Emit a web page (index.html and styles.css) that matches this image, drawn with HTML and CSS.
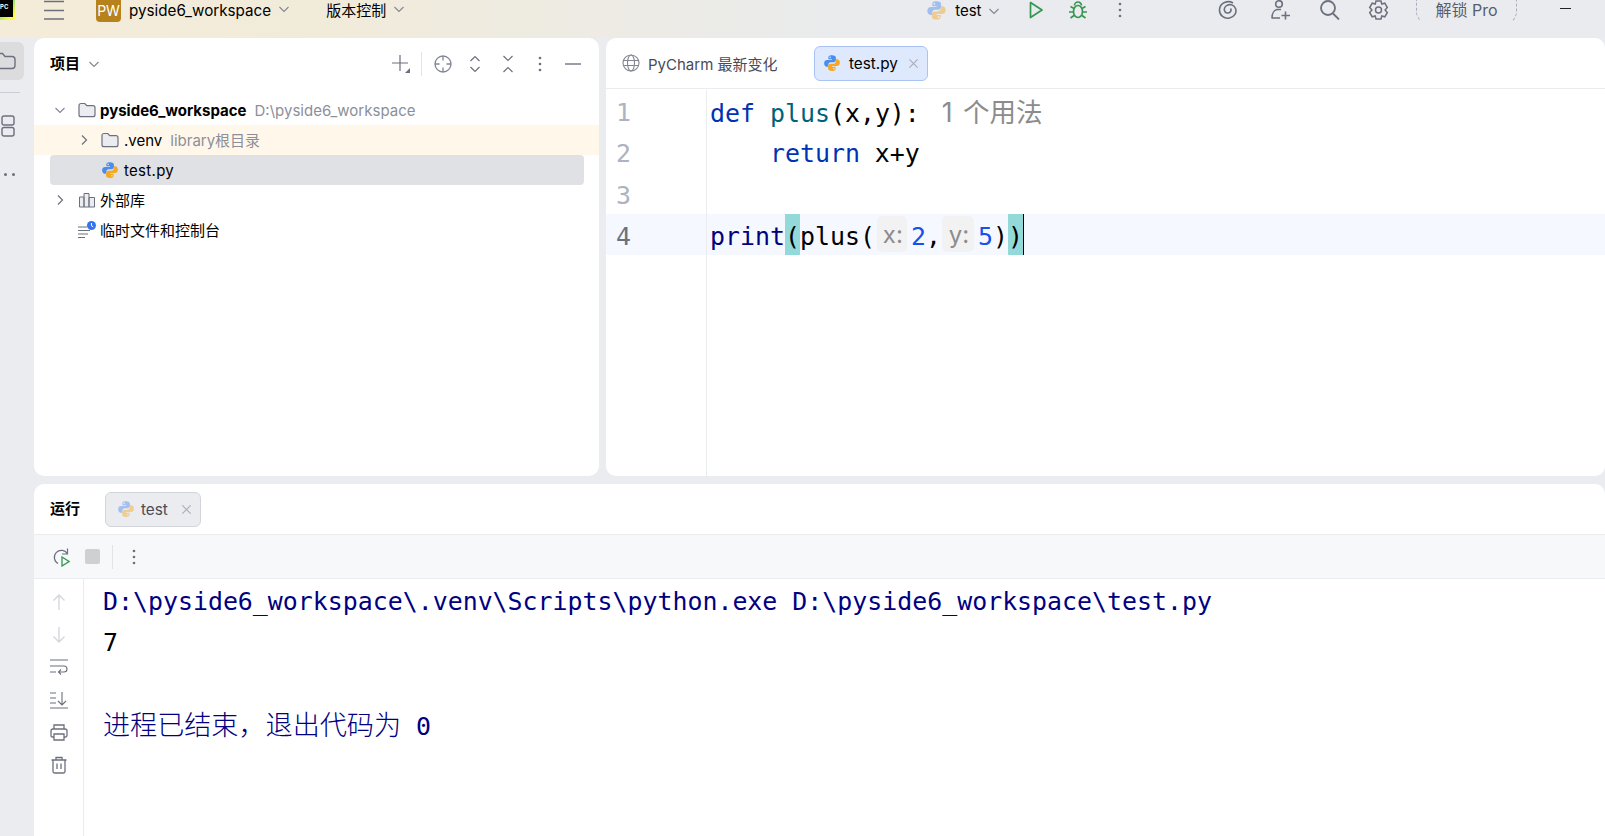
FILE: index.html
```html
<!DOCTYPE html>
<html lang="zh">

<head>
    <meta charset="UTF-8" />
    <title>pyside6_workspace - test.py</title>
    <link rel="stylesheet" href="styles.css">
</head>

<body>
    <svg class="defs" width="0" height="0">
        <symbol id="py" viewBox="0 0 24 24">
            <path fill="#4a8cf0" fill-rule="evenodd" d="M11.900 1.500c-4.100 0-4.700 1.700-4.700 3V7H12v1H5.400C3.300 8 1.500 9.500 1.500 12.300c0 2.900 1.600 4.700 3.600 4.700H7v-2.500C7 12.700 8.400 11 10.200 11h4c1.700 0 3-1.300 3-3V4.500c0-1.600-1.500-3-5.300-3zM9.500 3.300a1.100 1.100 0 110 2.200 1.100 1.100 0 010-2.200z" />
            <path fill="#f6a821" fill-rule="evenodd" transform="rotate(180 12 12)" d="M11.900 1.500c-4.100 0-4.700 1.700-4.700 3V7H12v1H5.400C3.300 8 1.500 9.500 1.500 12.300c0 2.900 1.600 4.700 3.600 4.700H7v-2.500C7 12.700 8.400 11 10.200 11h4c1.700 0 3-1.300 3-3V4.500c0-1.600-1.500-3-5.300-3zM9.500 3.300a1.100 1.100 0 110 2.200 1.100 1.100 0 010-2.200z" />
        </symbol>
        <symbol id="folder" viewBox="0 0 18 18">
            <path fill="#ebecf0" stroke="#6c707e" stroke-width="1.200" d="M1 4.500C1 3.400 1.900 2.500 3 2.500h3.800l2 2.200H15c1.100 0 2 .9 2 2v7c0 1.100-.9 2-2 2H3c-1.100 0-2-.9-2-2z" />
        </symbol>
        <symbol id="chev-down" viewBox="0 0 12 12">
            <path fill="none" stroke="#818594" stroke-width="1.100" d="M1.500 4l4.500 4.500L10.500 4" />
        </symbol>
        <symbol id="chev-right" viewBox="0 0 12 12">
            <path fill="none" stroke="#6c707e" stroke-width="1.200" d="M4 1.500L8.500 6 4 10.500" />
        </symbol>
        <symbol id="close" viewBox="0 0 12 12">
            <path fill="none" stroke="#a8adbd" stroke-width="1.200" d="M1.500 1.500l9 9m0-9l-9 9" />
        </symbol>
        <symbol id="kebab" viewBox="0 0 6 18">
            <circle cx="3" cy="3" r="1.300" fill="#6c707e" />
            <circle cx="3" cy="9" r="1.300" fill="#6c707e" />
            <circle cx="3" cy="15" r="1.300" fill="#6c707e" />
        </symbol>
    </svg>

    <header class="topbar">
        <div class="logo"><span>PC</span></div>
        <svg class="hamburger" viewBox="0 0 20 20">
            <path fill="none" stroke="#6c707e" stroke-width="1.600" d="M0 1.500h20M0 10.500h20M0 19h20" />
        </svg>
        <div class="pw-badge">PW</div>
        <span class="top-title">pyside6_workspace</span>
        <svg class="chev top-chev"><use href="#chev-down" /></svg>
        <span class="top-vcs">版本控制</span>
        <svg class="chev top-chev"><use href="#chev-down" /></svg>

        <svg class="run-py dim"><use href="#py" /></svg>
        <span class="top-run">test</span>
        <svg class="chev run-chev"><use href="#chev-down" /></svg>
        <svg class="run-btn" viewBox="0 0 16 18">
            <path fill="none" stroke="#369650" stroke-width="1.700" stroke-linejoin="round" d="M2.500 1.500L14 9 2.500 16.500z" />
        </svg>
        <svg class="debug-btn" viewBox="0 0 18 20">
            <g fill="none" stroke="#369650" stroke-width="1.700">
                <ellipse cx="9" cy="11.500" rx="4.500" ry="6" />
                <path d="M5.500 5.500a3.500 3.500 0 017 0M1.500 6.500l3.500 2M16.500 6.500l-3.500 2M0 12h4.500M18 12h-4.500M1.500 18l3.500-2.500M16.500 18L13 15.500" />
            </g>
        </svg>
        <svg class="top-kebab"><use href="#kebab" /></svg>

        <svg class="top-ico swirl" viewBox="0 0 20 20">
            <path fill="none" stroke="#6c707e" stroke-width="1.600" d="M15 3C10 0 2 2.500 1.500 9.500c-.4 6 5 9.500 10 8.500 5-1 7.500-5.500 6-9.500C16 4.500 11 3.500 8 6c-2.800 2.400-2 6.500 1 7 3 .4 5-2.500 3.500-4.500" />
        </svg>
        <svg class="top-ico user" viewBox="0 0 21 20">
            <g fill="none" stroke="#6c707e" stroke-width="1.600">
                <circle cx="9" cy="4" r="3.300" />
                <path d="M2 18c0-5 2.500-8 5-8.500h4M1.500 18H10M15.500 11.500v8M11.500 15.500h8.500" />
            </g>
        </svg>
        <svg class="top-ico search" viewBox="0 0 21 20">
            <g fill="none" stroke="#6c707e" stroke-width="1.800">
                <circle cx="9" cy="8" r="7" />
                <path d="M14 13.500l6 6" />
            </g>
        </svg>
        <svg class="top-ico gear" viewBox="0 0 21 20">
            <g fill="none" stroke="#6c707e" stroke-width="1.500">
                <circle cx="10.500" cy="10" r="3" />
                <path d="M8 1h5l.8 3 3-.8 2.500 4.300-2.200 2.500 2.200 2.500-2.500 4.300-3-.8-.8 3H8l-.8-3-3 .8-2.500-4.300L3.900 10 1.700 7.500l2.500-4.300 3 .8z" />
            </g>
        </svg>
        <div class="unlock">解锁 Pro</div>
        <div class="minimize"></div>
    </header>

    <div class="workspace">
        <nav class="sidebar">
            <div class="side-active">
                <svg class="side-folder" viewBox="0 0 18 18">
                    <path fill="none" stroke="#6c707e" stroke-width="1.400" d="M-3 1.500h5.500l2.500 3h7c1.700 0 3 1.300 3 3v6c0 1.700-1.300 3-3 3H-3" />
                </svg>
            </div>
            <div class="side-sep"></div>
            <svg class="side-layout" viewBox="0 0 14 22">
                <g fill="none" stroke="#6c707e" stroke-width="1.400">
                    <rect x="1" y="1" width="12" height="9" rx="2" />
                    <rect x="1" y="12.500" width="12" height="8.500" rx="2" />
                </g>
            </svg>
            <div class="side-dots"><i></i><i></i></div>
        </nav>

        <main class="panels">
            <div class="top-panels">
                <section class="panel project">
                    <div class="project-head">
                        <b class="panel-title">项目</b>
                        <svg class="chev title-chev"><use href="#chev-down" /></svg>
                        <div class="project-tools">
                            <svg class="tool plus" viewBox="0 0 18 18">
                                <path fill="none" stroke="#6c707e" stroke-width="1.200" d="M8 0v16M0 8h16" />
                                <path fill="#6c707e" d="M18 13v5h-5z" />
                            </svg>
                            <div class="tool-sep"></div>
                            <svg class="tool target" viewBox="0 0 18 18">
                                <g fill="none" stroke="#818594" stroke-width="1.300">
                                    <circle cx="9" cy="9" r="8" />
                                    <path d="M9 1v4.500M9 12.500V17M1 9h4.500M12.500 9H17" />
                                </g>
                            </svg>
                            <svg class="tool expand" viewBox="0 0 10 18">
                                <path fill="none" stroke="#6c707e" stroke-width="1.200" d="M.5 6l4.500-4.500L9.500 6M.5 12l4.500 4.500L9.500 12" />
                            </svg>
                            <svg class="tool collapse" viewBox="0 0 10 18">
                                <path fill="none" stroke="#6c707e" stroke-width="1.200" d="M.5 1L5 5.500 9.500 1M.5 17L5 12.500 9.500 17" />
                            </svg>
                            <svg class="tool t-kebab"><use href="#kebab" /></svg>
                            <div class="tool-min"></div>
                        </div>
                    </div>
                    <div class="tree">
                        <div class="row">
                            <svg class="chev row-chev"><use href="#chev-down" /></svg>
                            <svg class="ico-18"><use href="#folder" /></svg>
                            <b class="name root">pyside6_workspace</b>
                            <span class="hint">D:\pyside6_workspace</span>
                        </div>
                        <div class="row row-venv">
                            <svg class="chev row-chev"><use href="#chev-right" /></svg>
                            <svg class="ico-18"><use href="#folder" /></svg>
                            <span class="name">.venv</span>
                            <span class="hint">library根目录</span>
                        </div>
                        <div class="row row-file">
                            <svg class="ico-18"><use href="#py" /></svg>
                            <span class="name">test.py</span>
                        </div>
                        <div class="row">
                            <svg class="chev row-chev"><use href="#chev-right" /></svg>
                            <svg class="ico-18" viewBox="0 0 18 18">
                                <path fill="#ebecf0" stroke="#6c707e" d="M1.500 6h4.500v10H1.500zM6 2.500h5V16H6zM11 6.500h5.500V16H11z" />
                            </svg>
                            <span class="name">外部库</span>
                        </div>
                        <div class="row row-scratch">
                            <svg class="ico-18" viewBox="0 0 18 18">
                                <path stroke="#6c707e" stroke-width="1.200" d="M0 6h9M0 9.500h12M0 13h10M0 16.500h7" />
                                <circle cx="13.500" cy="4.500" r="4.500" fill="#3574f0" />
                                <path fill="none" stroke="#fff" d="M13.500 2v2.800l1.700 1" />
                            </svg>
                            <span class="name">临时文件和控制台</span>
                        </div>
                    </div>
                </section>

                <section class="panel editor">
                    <div class="tabs">
                        <div class="tab tab-news">
                            <svg class="globe" viewBox="0 0 18 18">
                                <g fill="none" stroke="#818594" stroke-width="1.100">
                                    <circle cx="9" cy="9" r="8" />
                                    <ellipse cx="9" cy="9" rx="3.500" ry="8" />
                                    <path d="M1.500 6.500h15M1.500 11.500h15" />
                                </g>
                            </svg>
                            <span>PyCharm 最新变化</span>
                        </div>
                        <div class="tab tab-active">
                            <svg class="ico-18"><use href="#py" /></svg>
                            <span>test.py</span>
                            <svg class="tab-close"><use href="#close" /></svg>
                        </div>
                    </div>
                    <div class="code-area">
                        <div class="code-row">
                            <div class="ln">1</div>
                            <div class="code"><span class="kw">def</span> <span class="fn">plus</span>(x,y):<span class="usages">1 个用法</span></div>
                        </div>
                        <div class="code-row">
                            <div class="ln">2</div>
                            <div class="code">    <span class="kw">return</span> x+y</div>
                        </div>
                        <div class="code-row">
                            <div class="ln">3</div>
                            <div class="code"></div>
                        </div>
                        <div class="code-row current">
                            <div class="ln">4</div>
                            <div class="code"><span class="builtin">print</span><span class="brace">(</span>plus(<span class="inlay inlay-x">x:</span><span class="num">2</span>,<span class="inlay inlay-y">y:</span><span class="num">5</span>)<span class="brace caret">)</span></div>
                        </div>
                        <div class="code-fill"><div class="gutter-fill"></div></div>
                    </div>
                </section>
            </div>

            <section class="panel run">
                <div class="run-tabs">
                    <b class="panel-title">运行</b>
                    <div class="run-tab">
                        <svg class="ico-18 dim"><use href="#py" /></svg>
                        <span>test</span>
                        <svg class="tab-close"><use href="#close" /></svg>
                    </div>
                </div>
                <div class="run-toolbar">
                    <svg class="rerun" viewBox="0 0 18 20">
                        <path fill="none" stroke="#6c707e" stroke-width="1.200" d="M15.500 7A7 7 0 106 16.500M15.500 1.500V7H10" />
                        <path fill="none" stroke="#369650" stroke-width="1.300" d="M10 10l7 4.500-7 4.500z" />
                    </svg>
                    <div class="stop"></div>
                    <div class="tool-sep"></div>
                    <svg class="run-kebab"><use href="#kebab" /></svg>
                </div>
                <div class="run-body">
                    <div class="run-side">
                        <svg class="side-ico" viewBox="0 0 18 18">
                            <path fill="none" stroke="#d3d5db" stroke-width="1.300" d="M9 17V2M3.500 7.500L9 2l5.500 5.500" />
                        </svg>
                        <svg class="side-ico" viewBox="0 0 18 18">
                            <path fill="none" stroke="#d3d5db" stroke-width="1.300" d="M9 1v15M3.500 10.500L9 16l5.500-5.500" />
                        </svg>
                        <svg class="side-ico" viewBox="0 0 18 18">
                            <path fill="none" stroke="#6c707e" stroke-width="1.100" d="M0 2h18M0 8h14c4 0 4 6 0 6H9M11 11.500L8.500 14l2.500 2.500M0 14h6" />
                        </svg>
                        <svg class="side-ico" viewBox="0 0 18 18">
                            <path fill="none" stroke="#6c707e" stroke-width="1.100" d="M0 2h6M0 7h6M0 12h6M0 17h18M12 1v13M8 10l4 4 4-4" />
                        </svg>
                        <svg class="side-ico" viewBox="0 0 18 18">
                            <path fill="none" stroke="#6c707e" stroke-width="1.300" d="M4 6V2h10v4M4 14H2.500C1.500 14 1 13.500 1 12.500V8c0-1.200.8-2 2-2h12c1.200 0 2 .8 2 2v4.500c0 1-.5 1.500-1.500 1.500H14M4 11h10v6H4z" />
                        </svg>
                        <svg class="side-ico" viewBox="0 0 18 18">
                            <path fill="none" stroke="#6c707e" stroke-width="1.300" d="M1.500 4h15M6 4V1.500h6V4M3 4v11.500c0 1 .5 1.500 1.500 1.500h9c1 0 1.500-.5 1.500-1.500V4M7 7.500V13M11 7.500V13" />
                        </svg>
                    </div>
                    <div class="console">
                        <div class="con-line out">D:\pyside6_workspace\.venv\Scripts\python.exe D:\pyside6_workspace\test.py</div>
                        <div class="con-line">7</div>
                        <div class="con-line"></div>
                        <div class="con-line out"><span class="con-cjk">进程已结束，退出代码为</span> 0</div>
                    </div>
                </div>
            </section>
        </main>
    </div>
</body>

</html>
```

FILE: styles.css
```css
* {
    box-sizing: border-box;
}

html,
body {
    margin: 0;
    height: 836px;
    overflow: hidden;
}

body {
    font-family: Inter, "Noto Sans CJK SC", sans-serif;
    font-size: 15px;
    background-color: #ebecf0;
    color: #000;
    display: flex;
    flex-direction: column;
}

svg {
    display: block;
    flex: none;
}

.defs {
    position: absolute;
}

.chev {
    width: 12px;
    height: 12px;
}

.ico-18 {
    width: 18px;
    height: 18px;
}

.dim {
    opacity: 0.45;
}

/* Top bar */
.topbar {
    height: 38px;
    flex: none;
    display: flex;
    align-items: flex-start;
    background: linear-gradient(90deg, #f4ecd8 0, #f1ebdb 350px, #e9ebef 900px);
}

.logo {
    width: 15px;
    height: 20px;
    background: linear-gradient(135deg, #21d789, #fcf84a 80%);
    padding: 0 2px 3px 0;
    border-radius: 0 0 2px 0;
}

.logo span {
    display: block;
    height: 100%;
    background: #000;
    color: #fff;
    font-size: 6px;
    font-weight: 700;
    line-height: 14px;
}

.hamburger {
    width: 20px;
    height: 20px;
    margin-left: 29px;
}

.pw-badge {
    width: 25px;
    height: 22px;
    margin-left: 32px;
    border-radius: 0 0 4px 4px;
    background: #b7811c;
    color: #fff;
    font-size: 14px;
    line-height: 21px;
    text-align: center;
}

.top-title {
    margin-left: 8px;
    line-height: 21px;
    font-size: 15.2px;
}

.top-chev {
    margin: 3px 0 0 7px;
}

.top-vcs {
    margin-left: 36px;
    line-height: 21px;
}

.run-py {
    width: 21px;
    height: 21px;
    margin-left: 521px;
}

.top-run {
    width: 27px;
    margin-left: 8px;
    line-height: 21px;
}

.run-chev {
    margin: 5px 0 0 6px;
}

.run-btn {
    width: 16px;
    height: 18px;
    margin: 1px 0 0 28px;
}

.debug-btn {
    width: 18px;
    height: 20px;
    margin-left: 25px;
}

.top-kebab {
    width: 6px;
    height: 18px;
    margin: 1px 0 0 30px;
}

.top-ico {
    width: 21px;
    height: 20px;
    margin-left: 28px;
}

.swirl {
    width: 20px;
    margin-left: 95px;
}

.user {
    margin-left: 32px;
}

.unlock {
    width: 101px;
    height: 25px;
    margin: 0 0 0 27px;
    border: 1px dashed #a8adbd;
    border-top: none;
    border-bottom-color: transparent;
    border-radius: 0 0 14px 14px;
    color: #5a5d6b;
    font-size: 16px;
    line-height: 21px;
    text-align: center;
}

.minimize {
    width: 11px;
    height: 1px;
    margin: 8px 0 0 43px;
    background: #222;
}

/* Layout */
.workspace {
    flex: 1;
    min-height: 0;
    display: flex;
}

.sidebar {
    width: 34px;
    flex: none;
    padding-top: 4px;
}

.side-active {
    width: 24px;
    height: 38px;
    border-radius: 0 6px 6px 0;
    background: #dcdcdf;
    padding-top: 10px;
}

.side-folder {
    width: 18px;
    height: 18px;
}

.side-sep {
    width: 20px;
    height: 1px;
    margin-top: 12px;
    background: #c9ccd6;
}

.side-layout {
    width: 14px;
    height: 22px;
    margin: 22px 0 0 1px;
}

.side-dots {
    display: flex;
    gap: 5px;
    margin: 36px 0 0 4px;
}

.side-dots i {
    width: 3px;
    height: 3px;
    border-radius: 50%;
    background: #6c707e;
}

.panels {
    flex: 1;
    min-width: 0;
    display: flex;
    flex-direction: column;
    gap: 8px;
}

.top-panels {
    height: 438px;
    flex: none;
    display: flex;
    gap: 7px;
}

.panel {
    background: #fff;
    border-radius: 10px;
    overflow: hidden;
}

.panel-title {
    font-size: 15px;
    font-weight: 700;
    line-height: 18px;
}

/* Project tree */
.project {
    width: 565px;
    flex: none;
}

.project-head {
    height: 52px;
    display: flex;
    align-items: center;
    padding-left: 16px;
}

.title-chev {
    margin-left: 8px;
}

.project-tools {
    display: flex;
    align-items: center;
    margin-left: auto;
    padding-right: 18px;
}

.tool-sep {
    width: 1px;
    height: 24px;
    background: #e3e4e8;
}

.project-tools .tool-sep {
    margin-left: 11px;
}

.tool {
    height: 18px;
}

.tool.plus,
.tool.target {
    width: 18px;
}

.tool.target {
    margin-left: 12px;
}

.tool.expand,
.tool.collapse {
    width: 10px;
}

.tool.expand {
    margin-left: 18px;
}

.tool.collapse {
    margin-left: 23px;
}

.tool.t-kebab {
    width: 6px;
    margin-left: 24px;
}

.tool-min {
    width: 16px;
    height: 2px;
    margin-left: 22px;
    background: #9a9da8;
}

.tree {
    padding-top: 5px;
}

.row {
    height: 30px;
    display: flex;
    align-items: center;
    padding-left: 20px;
    line-height: 20px;
}

.row .name,
.row .hint {
    margin-top: 2px;
}

.row-chev {
    margin-right: 12px;
}

.row .ico-18 {
    margin-right: 4px;
}

.row .hint {
    margin-left: 8px;
    color: #8c8f9a;
}

.root {
    font-weight: 700;
}

.row-venv {
    background: #fff8ea;
    padding-left: 44px;
}

.row-venv .row-chev {
    margin-right: 11px;
}

.row-venv .ico-18,
.row-file .ico-18 {
    margin-right: 5px;
}

.row-file {
    margin: 0 15px 0 16px;
    padding-left: 51px;
    background: #dfe1e5;
    border-radius: 4px;
    letter-spacing: 0.3px;
}

.row-scratch {
    padding-left: 44px;
}

/* Editor */
.editor {
    flex: 1;
    min-width: 0;
    display: flex;
    flex-direction: column;
}

.tabs {
    height: 51px;
    flex: none;
    border-bottom: 1px solid #ebecf0;
    display: flex;
    align-items: center;
    padding-left: 16px;
    font-size: 15.3px;
}

.tab {
    display: flex;
    align-items: center;
}

.tab-news {
    color: #494b57;
    width: 192px;
    font-size: 15px;
}

.globe {
    width: 18px;
    height: 18px;
    margin-right: 8px;
}

.tab-active {
    width: 114px;
    height: 35px;
    padding-left: 8px;
    border: 1px solid #a9c3f5;
    border-radius: 6px;
    background: #dfe9fd;
}

.tab-active span {
    margin-left: 8px;
}

.tab-close {
    width: 11px;
    height: 11px;
    margin-left: auto;
    margin-right: 8px;
}

.code-area {
    flex: 1;
    min-height: 0;
    display: flex;
    flex-direction: column;
    padding-top: 1px;
}

.code-row {
    height: 41.33px;
    flex: none;
    display: flex;
    font-family: "DejaVu Sans Mono", monospace;
    font-size: 24.9px;
    line-height: 45px;
    white-space: pre;
}

.ln {
    width: 101px;
    flex: none;
    padding-left: 10px;
    border-right: 1px solid #ebecf0;
    color: #aeb3c2;
}

.code {
    padding-left: 3px;
    flex: 1;
}

.current {
    background: #f5f8fe;
}

.current .ln {
    color: #6c707e;
}

.code-fill {
    flex: 1;
}

.gutter-fill {
    width: 101px;
    height: 100%;
    border-right: 1px solid #ebecf0;
}

.kw {
    color: #0033b3;
}

.fn {
    color: #00627a;
}

.builtin {
    color: #000080;
}

.num {
    color: #1750eb;
}

.brace {
    background: #93d9d9;
    display: inline-block;
    height: 41px;
    vertical-align: top;
}

.caret {
    box-shadow: 1px 0 0 #000;
}

.usages {
    margin-left: 22px;
    font-family: Inter, "Noto Sans CJK SC", sans-serif;
    font-size: 26.5px;
    word-spacing: 3px;
    color: #8c8c8c;
}

.inlay {
    display: inline-block;
    height: 36px;
    line-height: 38px;
    vertical-align: top;
    margin-top: 2px;
    padding-left: 2px;
    text-align: center;
    font-family: Inter, sans-serif;
    font-size: 24px;
    color: #8c8c8c;
    background: #f2f2f3;
    border-radius: 5px;
}

.inlay-x {
    width: 30px;
    margin-left: 2px;
    margin-right: 4px;
}

.inlay-y {
    width: 32px;
    margin-left: 1px;
    margin-right: 4px;
}

/* Run panel */
.run {
    flex: 1;
    min-height: 0;
    border-radius: 10px 10px 0 0;
    display: flex;
    flex-direction: column;
}

.run-tabs {
    height: 51px;
    flex: none;
    display: flex;
    align-items: center;
    padding-left: 16px;
    border-bottom: 1px solid #ebecf0;
}

.run-tab {
    width: 96px;
    height: 35px;
    margin-left: 25px;
    display: flex;
    align-items: center;
    padding-left: 11px;
    border: 1px solid #d3d5db;
    border-radius: 6px;
    background: #ebecf0;
    color: #494b57;
    font-size: 15.3px;
}

.run-tab span {
    margin-left: 6px;
}

.run-toolbar {
    height: 44px;
    flex: none;
    display: flex;
    align-items: center;
    padding-left: 18px;
    background: #f7f8fa;
    border-bottom: 1px solid #ebecf0;
}

.rerun {
    width: 18px;
    height: 20px;
}

.stop {
    width: 15px;
    height: 15px;
    margin: 0 12px 0 15px;
    border-radius: 2px;
    background: #cfd0d3;
}

.run-kebab {
    width: 6px;
    height: 18px;
    margin-left: 18px;
}

.run-body {
    flex: 1;
    min-height: 0;
    display: flex;
}

.run-side {
    width: 50px;
    flex: none;
    border-right: 1px solid #ebecf0;
    display: flex;
    flex-direction: column;
    align-items: center;
    gap: 14.6px;
    padding-top: 14px;
}

.side-ico {
    width: 18px;
    height: 18px;
}

.console {
    padding: 2px 0 0 19px;
    font-family: "DejaVu Sans Mono", monospace;
    font-size: 24.9px;
}

.con-line {
    height: 41px;
    line-height: 41px;
    white-space: pre;
}

.con-line:last-child {
    margin-top: -1px;
}

.out {
    color: #000080;
}

.con-cjk {
    font-family: "Noto Sans CJK SC", sans-serif;
    font-size: 27.1px;
    font-weight: 300;
}
```
